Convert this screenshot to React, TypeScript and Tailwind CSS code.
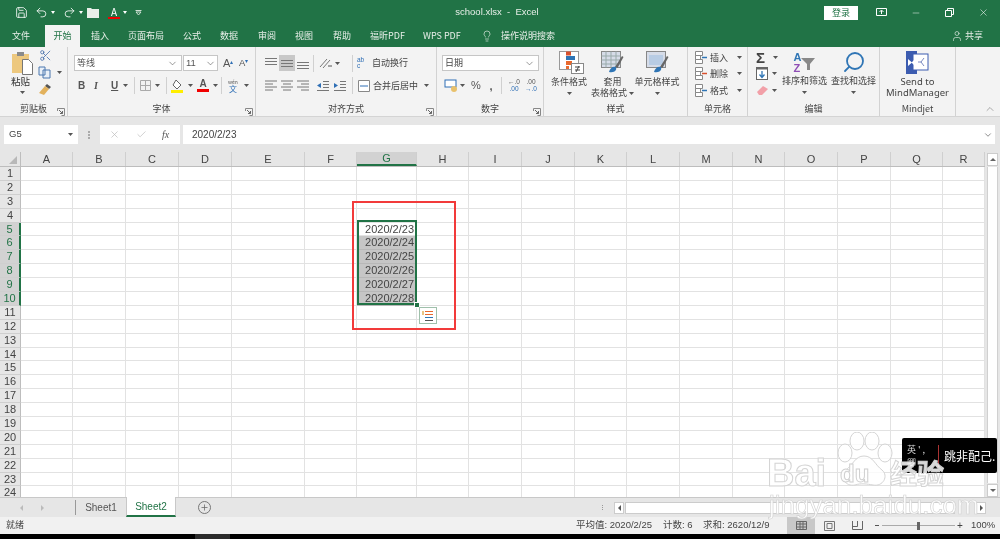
import React from 'react';
import { Save, Undo2, Redo2, Lightbulb, User, Scissors, X, Check, Search, Plus, ChevronUp, ChevronDown, Minus } from 'lucide-react';

const cjk = { fontFamily: '"Noto Sans CJK SC", "Liberation Sans", sans-serif' };
const latinFirst = { fontFamily: '"Liberation Sans", "Noto Sans CJK SC", sans-serif' };

const columns = [
  { name: 'A', w: 'w-[52px]' }, { name: 'B', w: 'w-[53px]' }, { name: 'C', w: 'w-[53px]' },
  { name: 'D', w: 'w-[53px]' }, { name: 'E', w: 'w-[73px]' }, { name: 'F', w: 'w-[52px]' },
  { name: 'G', w: 'w-[60px]' }, { name: 'H', w: 'w-[52px]' }, { name: 'I', w: 'w-[53px]' },
  { name: 'J', w: 'w-[53px]' }, { name: 'K', w: 'w-[52px]' }, { name: 'L', w: 'w-[53px]' },
  { name: 'M', w: 'w-[53px]' }, { name: 'N', w: 'w-[52px]' }, { name: 'O', w: 'w-[53px]' },
  { name: 'P', w: 'w-[53px]' }, { name: 'Q', w: 'w-[52px]' }, { name: 'R', w: 'w-[42px]' },
];

const rows = Array.from({ length: 24 }, (_, i) => i + 1);

const dates: Record<number, string> = {
  5: '2020/2/23', 6: '2020/2/24', 7: '2020/2/25', 8: '2020/2/26', 9: '2020/2/27', 10: '2020/2/28',
};

const tabs = [
  { label: '文件', c: 'ml-[12px] w-[18px]' },
  { label: '开始', c: 'ml-[15px] w-[35px] bg-[#f3f3f3] text-[#217346] justify-center' },
  { label: '插入', c: 'ml-[11px] w-[18px]' },
  { label: '页面布局', c: 'ml-[19px] w-[36px]' },
  { label: '公式', c: 'ml-[19px] w-[18px]' },
  { label: '数据', c: 'ml-[19px] w-[18px]' },
  { label: '审阅', c: 'ml-[20px] w-[18px]' },
  { label: '视图', c: 'ml-[19px] w-[18px]' },
  { label: '帮助', c: 'ml-[20px] w-[18px]' },
  { label: '福昕PDF', c: 'ml-[19px] w-[34px]' },
  { label: 'WPS PDF', c: 'ml-[19px] w-[38px]' },
];

function Dd({ className = '' }: { className?: string }) {
  return (
    <svg width="5" height="3" viewBox="0 0 5 3" className={`shrink-0 ${className}`}>
      <path d="M0 0h5L2.5 3z" fill="#555" />
    </svg>
  );
}

function Launcher() {
  return (
    <svg width="8" height="8" viewBox="0 0 8 8" className="shrink-0">
      <path d="M.5 3V.5H7.500V7.500H4.500" fill="none" stroke="#888" />
      <path d="M2 2l3.500 3.500M5.500 3v2.500H3" fill="none" stroke="#666" />
    </svg>
  );
}

function Lines({ kind }: { kind: 'left' | 'center' | 'right' | 'top' | 'middle' | 'bottom' }) {
  const d = {
    left: 'M1 2h12M1 5h8M1 8h12M1 11h8',
    center: 'M1 2h12M3 5h8M1 8h12M3 11h8',
    right: 'M1 2h12M5 5h8M1 8h12M5 11h8',
    top: 'M1 1.500h12M1 4.500h12M1 7.500h12',
    middle: 'M1 3.500h12M1 6.500h12M1 9.500h12',
    bottom: 'M1 5.500h12M1 8.500h12M1 11.500h12',
  }[kind];
  return (
    <svg width="14" height="13" viewBox="0 0 14 13">
      <path d={d} stroke="#777" fill="none" />
    </svg>
  );
}

function GroupLabel({ text, launcher = true }: { text: string; launcher?: boolean }) {
  return (
    <div className="h-[15px] relative flex items-center justify-center text-[9px] text-[#444]">
      <span>{text}</span>
      {launcher && (
        <span className="absolute right-[2px] bottom-[0px]">
          <Launcher />
        </span>
      )}
    </div>
  );
}

function Sep() {
  return <div className="w-px h-[17px] bg-[#d0d0d0] shrink-0" />;
}

function Clipboard() {
  return (
    <div className="w-[68px] shrink-0 border-r border-[#d2d2d2] flex flex-col">
      <div className="h-[55px] flex">
        <div className="w-[38px] pl-[11px] pt-[4px] flex flex-col items-start">
          <svg width="23" height="24" viewBox="0 0 23 24">
            <rect x="1" y="3" width="17" height="19" fill="#edc87e" />
            <rect x="6" y="1" width="7" height="4" fill="#8a8a8a" />
            <path d="M11.500 8.500h6l4 4v11h-10z" fill="#fff" stroke="#777" />
          </svg>
          <span className="text-[9.5px] leading-[13px] text-[#333]">粘贴</span>
          <Dd className="ml-[9px] mt-[3px]" />
        </div>
        <div className="flex flex-col pt-[2px] gap-[3px]">
          <Scissors size={13} className="text-[#3e6aa8] ml-[1px]" strokeWidth={1.4} />
          <div className="flex items-center h-[14px]">
            <svg width="13" height="13" viewBox="0 0 13 13">
              <path d="M1 1h6v8H1zM5 4h7v8H5z" fill="#e9f0f8" stroke="#4a76ae" />
            </svg>
            <Dd className="ml-[6px]" />
          </div>
          <svg width="14" height="13" viewBox="0 0 14 13" className="mt-[1px]">
            <path d="M9 1l4 3-2 2-4-3z" fill="#555" />
            <path d="M7 3l4 3-5 6-5-2z" fill="#e2b15c" />
          </svg>
        </div>
      </div>
      <GroupLabel text="剪贴板" />
    </div>
  );
}

function FontGroup() {
  return (
    <div className="w-[188px] shrink-0 border-r border-[#d2d2d2] flex flex-col">
      <div className="h-[55px] flex flex-col">
        <div className="flex items-center mt-[8px] ml-[6px] h-[16px]">
          <div className="w-[108px] h-[16px] bg-white border border-[#c6c6c6] flex items-center justify-between px-[2px]">
            <span className="text-[9px] text-[#555]">等线</span>
            <ChevronDown size={11} className="text-[#555] mr-[1px]" strokeWidth={1.3} />
          </div>
          <div className="w-[35px] h-[16px] bg-white border border-[#c6c6c6] flex items-center justify-between pl-[2px] ml-px">
            <span className="text-[9.5px] text-[#555]" style={latinFirst}>11</span>
            <ChevronDown size={11} className="text-[#555] mr-[1px]" strokeWidth={1.3} />
          </div>
          <span className="ml-[5px] text-[11px] text-[#555] w-[16px]" style={latinFirst}>A<sup className="text-[#2f6fb5] text-[6px]">▴</sup></span>
          <span className="text-[9.5px] text-[#555] w-[12px]" style={latinFirst}>A<sup className="text-[#2f6fb5] text-[6px]">▾</sup></span>
        </div>
        <div className="flex items-center mt-[6px] h-[17px] text-[#555]" style={latinFirst}>
          <span className="ml-[10px] w-[16px] text-[10px] font-bold">B</span>
          <span className="w-[17px] text-[10px] italic font-bold" style={{ fontFamily: '"Liberation Serif"' }}>I</span>
          <span className="w-[12px] text-[10px] font-bold underline">U</span>
          <Dd />
          <div className="w-[6px]" />
          <Sep />
          <svg width="12" height="12" viewBox="0 0 12 12" className="ml-[5px]">
            <path d="M.5.500h10v10H.5zM5.500.5v10M.5 5.500h10" fill="none" stroke="#aaa" />
          </svg>
          <Dd className="ml-[3px]" />
          <div className="w-[6px]" />
          <Sep />
          <svg width="14" height="14" viewBox="0 0 14 14" className="ml-[3px]">
            <path d="M6 1l5 5-4 4-4-4z" fill="#fff" stroke="#666" />
            <rect x="1" y="11" width="12" height="3" fill="#ffee00" />
          </svg>
          <Dd className="ml-[4px]" />
          <span className="ml-[3px] w-[14px] flex flex-col items-center">
            <span className="text-[10px] leading-[10px] font-bold">A</span>
            <span className="w-[12px] h-[3px] bg-[#f00000]" />
          </span>
          <Dd className="ml-[3px]" />
          <div className="w-[3px]" />
          <Sep />
          <span className="ml-[4px] w-[14px] flex flex-col items-center text-[5px] leading-[6px] text-[#555]" style={cjk}>
            <span>wén</span>
            <span className="text-[8px] leading-[8px] text-[#2f6fb5]">文</span>
          </span>
          <Dd className="ml-[4px]" />
        </div>
      </div>
      <GroupLabel text="字体" />
    </div>
  );
}

function AlignGroup() {
  return (
    <div className="w-[181px] shrink-0 border-r border-[#d2d2d2] flex flex-col">
      <div className="h-[55px] flex flex-col">
        <div className="flex items-center mt-[8px] h-[16px] ml-[7px]">
          <div className="w-[16px] flex justify-center"><Lines kind="top" /></div>
          <div className="w-[16px] h-[16px] bg-[#c8c8c8] flex items-center justify-center"><Lines kind="middle" /></div>
          <div className="w-[16px] flex justify-center"><Lines kind="bottom" /></div>
          <div className="w-[2px]" />
          <Sep />
          <svg width="14" height="12" viewBox="0 0 14 12" className="ml-[5px]">
            <path d="M1 10L8 2M4 11l7-8" stroke="#777" fill="none" />
            <path d="M9 9h4" stroke="#555" />
          </svg>
          <Dd className="ml-[2px]" />
          <div className="w-[12px]" />
          <Sep />
          <span className="ml-[4px] w-[12px] text-[6.5px] leading-[6px] text-[#2f6fb5]" style={latinFirst}>ab<br />c</span>
          <span className="ml-[3px] text-[9px] text-[#444] whitespace-nowrap">自动换行</span>
        </div>
        <div className="flex items-center mt-[6px] h-[17px] ml-[7px]">
          <div className="w-[16px] flex justify-center"><Lines kind="left" /></div>
          <div className="w-[16px] flex justify-center"><Lines kind="center" /></div>
          <div className="w-[16px] flex justify-center"><Lines kind="right" /></div>
          <div className="w-[4px]" />
          <svg width="14" height="12" viewBox="0 0 14 12" className="ml-[1px]">
            <path d="M7 1.500h6M7 4.500h6M7 7.500h6M1 10.500h12" stroke="#777" />
            <path d="M5 3L1 5.500 5 8z" fill="#2f6fb5" />
          </svg>
          <svg width="14" height="12" viewBox="0 0 14 12" className="ml-[3px]">
            <path d="M7 1.500h6M7 4.500h6M7 7.500h6M1 10.500h12" stroke="#777" />
            <path d="M1 3l4 2.500L1 8z" fill="#2f6fb5" />
          </svg>
          <div className="w-[5px]" />
          <Sep />
          <svg width="12" height="12" viewBox="0 0 12 12" className="ml-[5px]">
            <path d="M.5.500h11v11H.5z" fill="#fff" stroke="#888" />
            <path d="M2 6h8" stroke="#2f6fb5" />
          </svg>
          <span className="ml-[3px] text-[9px] text-[#444] whitespace-nowrap">合并后居中</span>
          <Dd className="ml-[6px]" />
        </div>
      </div>
      <GroupLabel text="对齐方式" />
    </div>
  );
}

function NumberGroup() {
  return (
    <div className="w-[107px] shrink-0 border-r border-[#d2d2d2] flex flex-col">
      <div className="h-[55px] flex flex-col">
        <div className="mt-[8px] ml-[5px] w-[97px] h-[16px] bg-white border border-[#c6c6c6] flex items-center justify-between px-[2px]">
          <span className="text-[9px] text-[#444]">日期</span>
          <ChevronDown size={11} className="text-[#555] mr-[1px]" strokeWidth={1.3} />
        </div>
        <div className="flex items-center mt-[6px] h-[17px] text-[#555]" style={latinFirst}>
          <svg width="14" height="14" viewBox="0 0 14 14" className="ml-[7px]">
            <rect x="1" y="1" width="11" height="7" fill="#fff" stroke="#2f6fb5" />
            <circle cx="10" cy="10" r="3" fill="#e8c16c" />
          </svg>
          <Dd className="ml-[2px]" />
          <span className="ml-[3px] w-[16px] text-[11px] text-center">%</span>
          <span className="w-[14px] text-[11px] font-bold leading-[10px] text-center">,</span>
          <div className="w-[3px]" />
          <Sep />
          <span className="ml-[4px] w-[16px] text-[6.5px] leading-[6.5px] text-center text-[#555]">←.0<br /><span className="text-[#2f6fb5]">.00</span></span>
          <span className="ml-[1px] w-[16px] text-[6.5px] leading-[6.5px] text-center text-[#555]">.00<br /><span className="text-[#2f6fb5]">→.0</span></span>
        </div>
      </div>
      <GroupLabel text="数字" />
    </div>
  );
}

function TableIcon({ brush }: { brush: boolean }) {
  return (
    <svg width="23" height="23" viewBox="0 0 23 23">
      <rect x=".5" y=".5" width="19" height="16" fill="#d6dce8" stroke="#888" />
      {brush ? (
        <path d="M.5 5h19M.5 9h19M.5 13h19M5 .5v16M10 .5v16M15 .5v16" stroke="#9aa" fill="none" />
      ) : (
        <rect x="3" y="4" width="14" height="10" fill="#b8cce4" />
      )}
      <path d="M14 16l7-11 1.500 1-6 11z" fill="#666" />
      <path d="M8 21c1-4 4-6 7-5 1 3-1 6-7 5z" fill="#2f75b5" />
    </svg>
  );
}

function BigLabel({ children }: { children: React.ReactNode }) {
  return <div className="text-[9px] leading-[11px] text-center text-[#444] whitespace-nowrap">{children}</div>;
}

function StylesGroup() {
  return (
    <div className="w-[144px] shrink-0 border-r border-[#d2d2d2] flex flex-col">
      <div className="h-[55px] flex">
        <div className="w-[50px] flex flex-col items-center pt-[4px]">
          <svg width="25" height="23" viewBox="0 0 25 23" className="ml-[4px]">
            <rect x=".5" y=".5" width="19" height="18" fill="#fff" stroke="#999" />
            <path d="M7 .5h5v4H7z" fill="#d8502c" />
            <path d="M7 5h9v4H7z" fill="#2f75b5" />
            <path d="M7 10h6v4H7z" fill="#e8692e" />
            <path d="M7 15h3v3H7z" fill="#e8692e" />
            <rect x="12.500" y="12.500" width="12" height="10" fill="#fff" stroke="#888" />
            <path d="M16 16h5M16 19h5M20 15l-3 6" stroke="#444" fill="none" />
          </svg>
          <div className="h-[2px]" />
          <BigLabel>条件格式</BigLabel>
          <Dd className="mt-[5px]" />
        </div>
        <div className="w-[37px] flex flex-col items-center pt-[4px]">
          <TableIcon brush />
          <div className="h-[2px]" />
          <BigLabel>套用</BigLabel>
          <BigLabel>表格格式 <Dd className="inline align-middle" /></BigLabel>
        </div>
        <div className="w-[52px] flex flex-col items-center pt-[4px]">
          <TableIcon brush={false} />
          <div className="h-[2px]" />
          <BigLabel>单元格样式</BigLabel>
          <Dd className="mt-[5px]" />
        </div>
      </div>
      <GroupLabel text="样式" launcher={false} />
    </div>
  );
}

function CellRow({ text, color }: { text: string; color: string }) {
  return (
    <div className="flex items-center h-[16.5px] ml-[7px]">
      <svg width="13" height="13" viewBox="0 0 13 13">
        <path d="M.5.500h7v4h-7zM.500 4.500h5v4h-5zM.500 8.500h7v4h-7z" fill="#fff" stroke="#888" />
        <path d="M7 6.500h5" stroke={color} strokeWidth="1.500" />
      </svg>
      <span className="ml-[2px] w-[27px] text-[9px] text-[#444]">{text}</span>
      <Dd />
    </div>
  );
}

function CellsGroup() {
  return (
    <div className="w-[60px] shrink-0 border-r border-[#d2d2d2] flex flex-col">
      <div className="h-[55px] pt-[2px] flex flex-col">
        <CellRow text="插入" color="#2f75b5" />
        <CellRow text="删除" color="#d8502c" />
        <CellRow text="格式" color="#2f75b5" />
      </div>
      <GroupLabel text="单元格" launcher={false} />
    </div>
  );
}

function EditGroup() {
  return (
    <div className="w-[132px] shrink-0 border-r border-[#d2d2d2] flex flex-col">
      <div className="h-[55px] flex">
        <div className="w-[32px] pt-[2px] pl-[8px] flex flex-col">
          <div className="flex items-center h-[16.5px]">
            <span className="w-[15px] text-[15px] font-bold leading-[15px] text-[#444]" style={latinFirst}>Σ</span>
            <Dd className="ml-[2px]" />
          </div>
          <div className="flex items-center h-[16.5px]">
            <svg width="13" height="13" viewBox="0 0 13 13">
              <rect x=".5" y=".5" width="11" height="12" fill="#fff" stroke="#666" />
              <path d="M.5.500h11v2h-11z" fill="#666" />
              <path d="M6 4v6M3.500 7.500L6 10.500l2.500-3" stroke="#2f75b5" fill="none" strokeWidth="1.300" />
            </svg>
            <Dd className="ml-[3px]" />
          </div>
          <div className="flex items-center h-[16.5px]">
            <svg width="13" height="12" viewBox="0 0 13 12">
              <path d="M1 8l6-6 5 3-6 6H3z" fill="#f2a0a8" />
            </svg>
            <Dd className="ml-[3px]" />
          </div>
        </div>
        <div className="w-[49px] flex flex-col items-center">
          <div className="h-[27px] flex items-end">
            <span className="flex flex-col text-[11px] leading-[11px] font-bold" style={latinFirst}>
              <span className="text-[#2f75b5]">A</span>
              <span className="text-[#8e4db5]">Z</span>
            </span>
            <svg width="14" height="14" viewBox="0 0 14 14" className="mb-[3px]">
              <path d="M0 1h14L9 7v6H6V7z" fill="#888" />
            </svg>
          </div>
          <div className="h-[1px]" />
          <BigLabel>排序和筛选</BigLabel>
          <Dd className="mt-[5px]" />
        </div>
        <div className="w-[49px] flex flex-col items-center">
          <div className="h-[27px] flex items-end">
            <Search size={24} className="text-[#2f75b5] -scale-x-100" strokeWidth={1.800} />
          </div>
          <div className="h-[1px]" />
          <BigLabel>查找和选择</BigLabel>
          <Dd className="mt-[5px]" />
        </div>
      </div>
      <GroupLabel text="编辑" launcher={false} />
    </div>
  );
}

function MindjetGroup() {
  return (
    <div className="w-[76px] shrink-0 border-r border-[#d2d2d2] flex flex-col">
      <div className="h-[55px] flex flex-col items-center pt-[4px]">
        <svg width="23" height="23" viewBox="0 0 23 23">
          <rect x="0" y="0" width="11" height="23" fill="#3c5cb0" />
          <rect x="7" y="3" width="15" height="16" fill="#fff" stroke="#3c5cb0" />
          <path d="M2 8v7l4-3.500zM9 8v7L5.500 11.500z" fill="#fff" />
          <path d="M12 11h3l3-4M15 11l3 4" stroke="#7a8ac0" fill="none" />
        </svg>
        <div className="h-[2px]" />
        <div className="text-[9.5px] leading-[11px] text-[#444] text-center" style={{ fontFamily: '"Noto Sans", sans-serif' }}>Send to</div>
        <div className="text-[9.5px] leading-[11px] text-[#444] text-center" style={{ fontFamily: '"Noto Sans", sans-serif' }}>MindManager</div>
      </div>
      <GroupLabel text="Mindjet" launcher={false} />
    </div>
  );
}

export default function App() {
  return (
    <div className="w-[1000px] h-[539px] overflow-hidden relative flex flex-col bg-white text-[#444] blur-[0.35px]" style={cjk}>
      {/* title bar */}
      <div className="h-[25px] bg-[#217346] flex items-center text-white shrink-0 relative">
        <Save size={13} className="ml-[15px]" strokeWidth={1.500} />
        <Undo2 size={13} className="ml-[7px]" strokeWidth={1.500} />
        <span className="ml-[3px] w-0 h-0 border-x-[2.5px] border-x-transparent border-t-[3px] border-t-white" />
        <Redo2 size={13} className="ml-[8px]" strokeWidth={1.500} />
        <span className="ml-[3px] w-0 h-0 border-x-[2.5px] border-x-transparent border-t-[3px] border-t-white" />
        <svg width="12" height="11" viewBox="0 0 12 11" className="ml-[4px]">
          <path d="M0 1h4l1 1h7v9H0z" fill="#e8efe9" />
        </svg>
        <span className="ml-[9px] w-[12px] flex flex-col items-center">
          <span className="text-[10px] leading-[10px]">A</span>
          <span className="w-[12px] h-[2px] bg-[#f00000]" />
        </span>
        <span className="ml-[3px] w-0 h-0 border-x-[2.5px] border-x-transparent border-t-[3px] border-t-white" />
        <svg width="7" height="6" viewBox="0 0 7 6" className="ml-[8px]">
          <path d="M.5 .5h6M1 2l2.500 3L6 2z" stroke="#cfe0d4" fill="none" />
        </svg>
        <div className="flex-1 text-center text-[9.5px] text-[#e8efe9] pl-[28px] whitespace-nowrap" style={latinFirst}>
          school.xlsx&nbsp; -&nbsp; Excel
        </div>
        <div className="w-[34px] h-[14px] bg-white text-[#217346] text-[9px] flex items-center justify-center">登录</div>
        <svg width="12" height="9" viewBox="0 0 12 9" className="ml-[18px]">
          <path d="M.5.500h10v7h-10zM5.500 6V2.500M3.500 4l2-2 2 2" fill="none" stroke="#fff" />
        </svg>
        <Minus size={10} className="ml-[23px]" strokeWidth={1.200} />
        <svg width="9" height="9" viewBox="0 0 9 9" className="ml-[24px]">
          <path d="M.5 2.500h6v6h-6zM2.500 2.500v-2h6v6h-2" fill="none" stroke="#fff" />
        </svg>
        <X size={11} className="ml-[24px] mr-[11px]" strokeWidth={1.200} />
      </div>

      {/* ribbon tabs */}
      <div className="h-[22px] bg-[#217346] flex items-stretch text-[9px] text-[#e8efe9] shrink-0">
        {tabs.map(t => (
          <div key={t.label} className={`flex items-center whitespace-nowrap ${t.c}`}>{t.label}</div>
        ))}
        <div className="flex items-center ml-[20px]">
          <Lightbulb size={12} strokeWidth={1.300} />
          <span className="ml-[8px]">操作说明搜索</span>
        </div>
        <div className="flex items-center ml-auto mr-[17px]">
          <User size={12} strokeWidth={1.300} />
          <span className="ml-[2px]">共享</span>
        </div>
      </div>

      {/* ribbon */}
      <div className="h-[69px] bg-[#f3f3f3] flex shrink-0 relative">
        <Clipboard />
        <FontGroup />
        <AlignGroup />
        <NumberGroup />
        <StylesGroup />
        <CellsGroup />
        <EditGroup />
        <MindjetGroup />
        <div className="flex-1 flex items-end justify-end pr-[4px] pb-[1px]">
          <ChevronUp size={12} className="text-[#777]" strokeWidth={1.200} />
        </div>
      </div>

      {/* formula bar */}
      <div className="h-[36px] bg-[#e6e6e6] shrink-0 flex items-start pt-[8px] pl-[4px] pr-[5px] border-t border-[#d4d4d4]">
        <div className="w-[74px] h-[19px] bg-white flex items-center justify-between px-[5px]">
          <span className="text-[9.5px] text-[#444]" style={latinFirst}>G5</span>
          <Dd />
        </div>
        <div className="w-[22px] h-[19px] flex flex-col items-center justify-center gap-[1px]">
          <span className="w-[2px] h-[2px] bg-[#aaa]" />
          <span className="w-[2px] h-[2px] bg-[#aaa]" />
          <span className="w-[2px] h-[2px] bg-[#aaa]" />
        </div>
        <div className="w-[80px] h-[19px] bg-white flex items-center pl-[9px]">
          <X size={11} className="text-[#bbb]" strokeWidth={1.500} />
          <Check size={11} className="text-[#bbb] ml-[16px]" strokeWidth={1.500} />
          <span className="ml-[15px] text-[10px] italic text-[#555]" style={{ fontFamily: '"Liberation Serif"' }}>fx</span>
        </div>
        <div className="ml-[3px] flex-1 h-[19px] bg-white flex items-center justify-between pl-[9px] pr-[2px]">
          <span className="text-[10px] text-[#444]" style={latinFirst}>2020/2/23</span>
          <ChevronDown size={10} className="text-[#555]" strokeWidth={1.600} />
        </div>
      </div>

      {/* sheet */}
      <div className="h-[345px] flex shrink-0 relative" style={latinFirst}>
        <div className="flex-1 flex flex-col overflow-hidden">
          <div className="h-[15px] flex shrink-0 bg-[#e6e6e6] border-b border-[#bdbdbd] text-[11px] leading-none text-[#444]">
            <div className="w-[21px] shrink-0 border-r border-[#bdbdbd] flex items-end justify-end pr-[3px] pb-[2px]">
              <span className="w-0 h-0 border-l-[8px] border-l-transparent border-b-[8px] border-b-[#b8b8b8]" />
            </div>
            {columns.map(c => (
              <div
                key={c.name}
                className={`${c.w} shrink-0 flex items-center justify-center border-r border-[#cfcfcf] pt-[1px] ${c.name === 'G' ? 'bg-[#d2d2d2] text-[#217346] border-b-2 border-b-[#217346]' : ''}`}
              >
                {c.name}
              </div>
            ))}
          </div>
          {rows.map(r => (
            <div key={r} className="h-[13.9px] flex shrink-0">
              <div className={`w-[21px] shrink-0 flex items-center justify-center text-[11px] leading-none border-b border-[#cfcfcf] ${dates[r] ? 'bg-[#d2d2d2] text-[#217346] border-r-2 border-r-[#217346]' : 'bg-[#e6e6e6] border-r border-r-[#bdbdbd]'}`}>
                {r}
              </div>
              {columns.map(c => {
                const selected = c.name === 'G' && dates[r];
                const shaded = selected && r !== 5;
                return (
                  <div
                    key={c.name}
                    className={`${c.w} shrink-0 border-r border-b flex items-center justify-end pr-[2px] text-[11px] leading-none text-[#444] ${shaded ? 'bg-[#c6c6c6] border-[#b8b8b8]' : 'border-[#e2e2e2]'}`}
                  >
                    {selected ? dates[r] : ''}
                  </div>
                );
              })}
            </div>
          ))}
        </div>
        {/* vertical scrollbar */}
        <div className="w-[15px] shrink-0 bg-[#e6e6e6] flex flex-col items-center">
          <div className="w-[11px] h-[13px] bg-white border border-[#ccc] flex items-center justify-center mt-[1px]">
            <span className="w-0 h-0 border-x-[3px] border-x-transparent border-b-[3px] border-b-[#666]" />
          </div>
          <div className="w-[11px] flex-1 bg-white border-x border-[#d0d0d0] my-[1px]" />
          <div className="w-[11px] h-[13px] bg-white border border-[#ccc] flex items-center justify-center">
            <span className="w-0 h-0 border-x-[3px] border-x-transparent border-t-[3px] border-t-[#666]" />
          </div>
        </div>
      </div>

      {/* sheet tabs */}
      <div className="h-[20px] bg-[#e6e6e6] shrink-0 flex items-stretch border-t border-[#c8c8c8] text-[10px]" style={latinFirst}>
        <span className="self-center ml-[20px] w-0 h-0 border-y-[3px] border-y-transparent border-r-[3px] border-r-[#bbb]" />
        <span className="self-center ml-[18px] w-0 h-0 border-y-[3px] border-y-transparent border-l-[3px] border-l-[#bbb]" />
        <div className="w-[1px] bg-[#999] ml-[31px] my-[2px]" />
        <div className="w-[50px] flex items-center justify-center text-[#555]">Sheet1</div>
        <div className="w-[50px] bg-white border-b-2 border-b-[#217346] border-x border-x-[#c8c8c8] -mt-px flex items-center justify-center text-[#217346]">Sheet2</div>
        <div className="self-center ml-[22px] w-[13px] h-[13px] rounded-full border border-[#777] flex items-center justify-center">
          <Plus size={9} className="text-[#666]" strokeWidth={2} />
        </div>
        <div className="ml-[391px] self-center flex flex-col gap-[1px]">
          <span className="w-[1px] h-[1px] bg-[#999]" />
          <span className="w-[1px] h-[1px] bg-[#999]" />
          <span className="w-[1px] h-[1px] bg-[#999]" />
        </div>
        <div className="ml-[11px] self-center flex items-center h-[12px]">
          <div className="w-[10px] h-[12px] bg-white border border-[#ccc] flex items-center justify-center">
            <span className="w-0 h-0 border-y-[3px] border-y-transparent border-r-[3px] border-r-[#555]" />
          </div>
          <div className="ml-[1px] w-[330px] h-[12px] bg-white border border-[#ccc]" />
          <div className="w-[21px]" />
          <div className="w-[10px] h-[12px] bg-white border border-[#ccc] flex items-center justify-center">
            <span className="w-0 h-0 border-y-[3px] border-y-transparent border-l-[3px] border-l-[#555]" />
          </div>
        </div>
      </div>

      {/* status bar */}
      <div className="h-[17px] bg-[#f1f1f1] shrink-0 flex items-stretch text-[9.5px] text-[#444] whitespace-nowrap" style={latinFirst}>
        <span className="self-center ml-[6px] w-[18px] shrink-0 text-[9px]">就绪</span>
        <span className="self-center ml-[552px] w-[75px] shrink-0">平均值: 2020/2/25</span>
        <span className="self-center ml-[12px] w-[28px] shrink-0">计数: 6</span>
        <span className="self-center ml-[12px] w-[65px] shrink-0">求和: 2620/12/9</span>
        <div className="ml-[19px] w-[28px] shrink-0 bg-[#c8c8c8] flex items-center justify-center">
          <svg width="11" height="9" viewBox="0 0 11 9">
            <path d="M.5.500h10v8H.5zM.5 3h10M.5 6h10M4 .5v8M7 .5v8" stroke="#666" fill="none" />
          </svg>
        </div>
        <div className="w-[28px] shrink-0 flex items-center justify-center">
          <svg width="11" height="10" viewBox="0 0 11 10">
            <path d="M.5.500h10v9H.5zM3 2.500h5v5H3z" stroke="#777" fill="none" />
          </svg>
        </div>
        <div className="w-[28px] shrink-0 flex items-center justify-center">
          <svg width="11" height="9" viewBox="0 0 11 9">
            <path d="M.5 0v8.500h10V0M.5 5.500h5V0" stroke="#666" fill="none" />
          </svg>
        </div>
        <span className="self-center ml-[4px] w-[4px] h-px bg-[#555] shrink-0" />
        <div className="self-center ml-[3px] w-[73px] h-px bg-[#aaa] flex items-center justify-center shrink-0">
          <span className="w-[3px] h-[8px] bg-[#666]" />
        </div>
        <span className="self-center ml-[2px] text-[10px] leading-[10px] w-[6px] shrink-0">+</span>
        <span className="self-center ml-[8px] text-[9.5px] shrink-0">100%</span>
      </div>

      {/* taskbar sliver */}
      <div className="flex-1 bg-black flex">
        <div className="ml-[195px] w-[35px] bg-[#2b2b2b]" />
      </div>

      {/* red annotation */}
      <div className="absolute left-[352px] top-[201px] w-[104px] h-[129px] border-2 border-[#f23a3a] pointer-events-none" />

      {/* selection outline */}
      <div className="absolute left-[357px] top-[220px] w-[60px] h-[85px] border-2 border-[#217346] pointer-events-none" />
      <div className="absolute left-[414px] top-[302px] w-[4px] h-[4px] bg-[#217346] border border-white box-content pointer-events-none" />

      {/* quick analysis */}
      <div className="absolute left-[419px] top-[307px] w-[18px] h-[17px] bg-white border border-[#9fc0ab] flex items-center justify-center">
        <svg width="12" height="12" viewBox="0 0 12 12">
          <path d="M3 1.500h8M3 4.500h8" stroke="#e8692e" />
          <path d="M3 7.500h8" stroke="#2f75b5" />
          <path d="M3 10.500h8" stroke="#555" />
          <path d="M1 1v4" stroke="#e2b15c" strokeWidth="1.500" />
        </svg>
      </div>

      {/* black logo */}
      <div className="absolute left-[902px] top-[438px] w-[95px] h-[35px] bg-black rounded-[2px] flex items-center text-white pointer-events-none">
        <span className="ml-[5px] w-[30px] flex flex-col text-[9px] leading-[13px] text-[#ddd]">
          <span>英 ' ,</span>
          <span>卿</span>
        </span>
        <span className="w-px h-[22px] bg-[#a33] ml-[1px]" />
        <span className="ml-[5px] text-[12px] leading-[16px] whitespace-nowrap" style={{ fontFamily: '"Noto Sans CJK JP", serif' }}>跳非配己.</span>
      </div>

      {/* baidu watermark */}
      <div className="absolute left-[767px] top-[432px] w-[182px] h-[86px] pointer-events-none" style={{ fontFamily: '"Liberation Sans", sans-serif' }}>
        <svg width="62" height="56" viewBox="0 0 62 56" className="absolute left-[66px] top-0">
          <g fill="#fff" fillOpacity=".8" stroke="#d4d4d4">
            <ellipse cx="12" cy="21" rx="7" ry="9" />
            <ellipse cx="24" cy="9" rx="7" ry="9" />
            <ellipse cx="39" cy="9" rx="7" ry="9" />
            <ellipse cx="52" cy="21" rx="7" ry="9" />
            <path d="M31 24c9 0 11 9 18 14 7 6 1 17-9 15-6-1-12-2-18 0-10 2-15-8-9-15 7-5 9-14 18-14z" />
          </g>
        </svg>
        <span className="absolute left-[0px] top-[22px] text-[38px] leading-[38px] font-bold text-white/80 [-webkit-text-stroke:1px_#d4d4d4]">Bai</span>
        <span className="absolute left-[73px] top-[30px] text-[24px] leading-[24px] font-bold text-white/85 [-webkit-text-stroke:1px_#d0d0d0]">du</span>
        <span className="absolute left-[123px] top-[26px] text-[27px] leading-[30px] font-bold text-white/85 [-webkit-text-stroke:1px_#d4d4d4] whitespace-nowrap" style={cjk}>经验</span>
        <span className="absolute left-[2px] top-[60px] text-[26px] leading-[26px] text-white/85 [-webkit-text-stroke:.6px_#d0d0d0] whitespace-nowrap">jingyan.baidu.com</span>
      </div>
    </div>
  );
}
